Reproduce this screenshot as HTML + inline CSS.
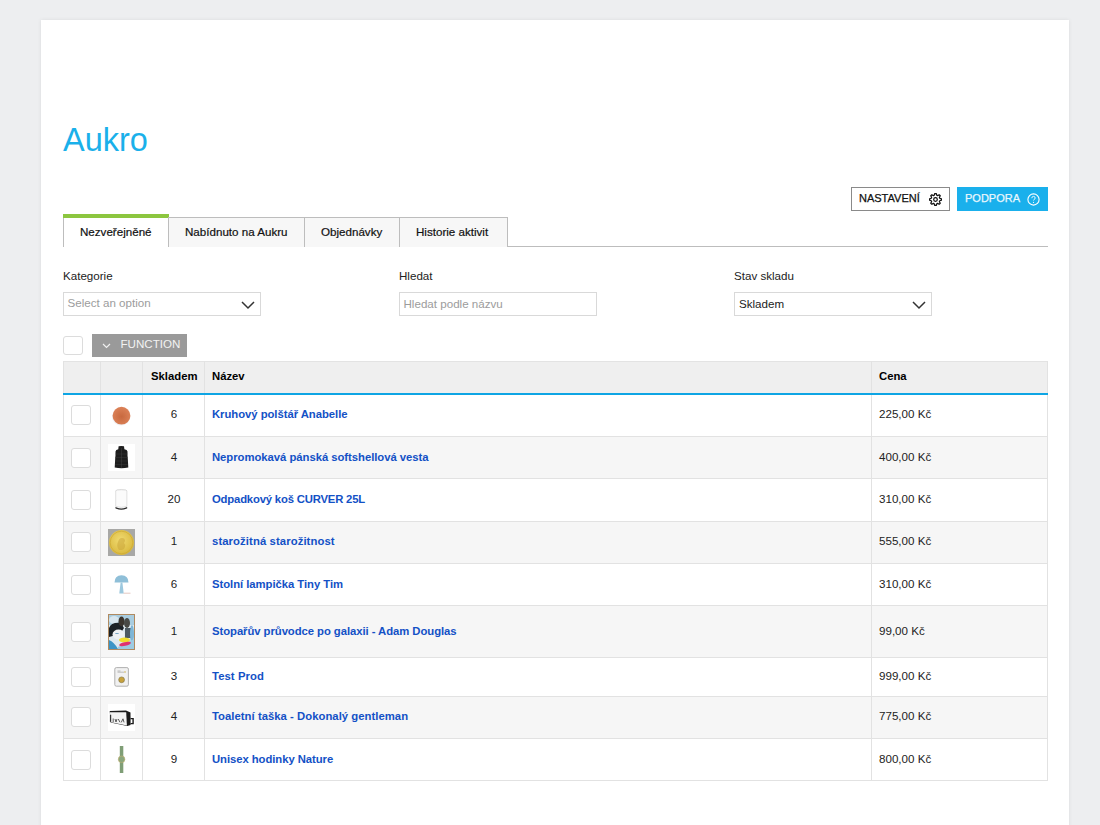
<!DOCTYPE html>
<html><head><meta charset="utf-8"><title>Aukro</title>
<style>
*{margin:0;padding:0;box-sizing:border-box}
html,body{width:1100px;height:825px;overflow:hidden;background:#edeef0;font-family:"Liberation Sans", sans-serif;color:#222}
.card{position:absolute;left:41px;top:20px;width:1028px;height:830px;background:#fff;box-shadow:0 0 4px rgba(0,0,0,.08)}
.a{position:absolute;white-space:nowrap}
.t11{font-size:11.6px;line-height:13px}
.up{font-size:11px!important;-webkit-text-stroke:.25px currentColor}
.b{font-size:11.3px!important;font-weight:bold}
.cb{position:absolute;width:19px;height:19px;border:1px solid #dcdcdc;border-radius:3px;background:#fff}
.lnk{color:#1351c6;font-weight:bold;font-size:11.3px!important}
</style></head><body>
<div class="card"></div>

<div class="a" style="left:63px;top:121.5px;font-size:32.5px;line-height:36px;color:#1ab0ea">Aukro</div>
<div class="a" style="left:851px;top:187px;width:99px;height:24px;border:1px solid #8a8a8a;background:#fff"></div>
<div class="a t11 up" style="left:859px;top:192px;color:#111">NASTAVENÍ</div>
<svg class="a" style="left:929px;top:192.5px" width="13" height="13" viewBox="0 0 13 13"><path d="M5.79 0.54 L7.21 0.54 L7.78 2.29 L8.57 2.62 L10.21 1.79 L11.21 2.79 L10.38 4.43 L10.71 5.22 L12.46 5.79 L12.46 7.21 L10.71 7.78 L10.38 8.57 L11.21 10.21 L10.21 11.21 L8.57 10.38 L7.78 10.71 L7.21 12.46 L5.79 12.46 L5.22 10.71 L4.43 10.38 L2.79 11.21 L1.79 10.21 L2.62 8.57 L2.29 7.78 L0.54 7.21 L0.54 5.79 L2.29 5.22 L2.62 4.43 L1.79 2.79 L2.79 1.79 L4.43 2.62 L5.22 2.29Z" fill="none" stroke="#111" stroke-width="1.25" stroke-linejoin="round"/><circle cx="6.5" cy="6.5" r="1.8" fill="none" stroke="#111" stroke-width="1.25"/></svg>
<div class="a" style="left:957px;top:187px;width:91px;height:24px;background:#1ab0ec"></div>
<div class="a t11 up" style="left:965px;top:192px;color:#eaf7fd">PODPORA</div>
<svg class="a" style="left:1027px;top:192.5px" width="13" height="13" viewBox="0 0 13 13"><circle cx="6.5" cy="6.5" r="5.6" fill="none" stroke="#fff" stroke-width="1.1"/><path d="M4.8 5.2 q0-1.8 1.7-1.8 q1.7 0 1.7 1.6 q0 1-1.2 1.5 q-.5.3-.5 1" fill="none" stroke="#eaf7fd" stroke-width="1"/><circle cx="6.5" cy="9.4" r=".6" fill="#eaf7fd"/></svg>

<div class="a" style="left:507px;top:246px;width:541px;height:1px;background:#bdbdbd"></div>
<div class="a" style="left:63px;top:214px;width:106px;height:4px;background:#8cc63f"></div>
<div class="a" style="left:63px;top:218px;width:106px;height:29px;border-left:1px solid #bdbdbd;border-right:1px solid #bdbdbd;background:#fff"></div>
<div class="a t11" style="left:80px;top:225px;color:#111;-webkit-text-stroke:.2px #111">Nezveřejněné</div>
<div class="a" style="left:168px;top:217px;width:137px;height:30px;border:1px solid #bdbdbd;border-bottom:0;background:#f7f7f7"></div>
<div class="a t11" style="left:185px;top:225px;color:#111;-webkit-text-stroke:.2px #111">Nabídnuto na Aukru</div>
<div class="a" style="left:304px;top:217px;width:96px;height:30px;border:1px solid #bdbdbd;border-bottom:0;background:#f7f7f7"></div>
<div class="a t11" style="left:321px;top:225px;color:#111;-webkit-text-stroke:.2px #111">Objednávky</div>
<div class="a" style="left:399px;top:217px;width:109px;height:30px;border:1px solid #bdbdbd;border-bottom:0;background:#f7f7f7"></div>
<div class="a t11" style="left:416px;top:225px;color:#111;-webkit-text-stroke:.2px #111">Historie aktivit</div>

<div class="a t11" style="left:63px;top:269px">Kategorie</div>
<div class="a" style="left:63px;top:292px;width:198px;height:24px;border:1px solid #d9d9d9;background:#fff"></div>
<div class="a t11" style="left:67.5px;top:296px;color:#9c9c9c">Select an option</div>
<svg class="a" style="left:241px;top:300.5px" width="14" height="9" viewBox="0 0 14 9"><path d="M1 1 L7 7 L13 1" fill="none" stroke="#333" stroke-width="1.5"/></svg>
<div class="a t11" style="left:399px;top:269px">Hledat</div>
<div class="a" style="left:399px;top:292px;width:198px;height:24px;border:1px solid #d9d9d9;background:#fff"></div>
<div class="a t11" style="left:403.5px;top:297px;color:#9c9c9c">Hledat podle názvu</div>
<div class="a t11" style="left:734px;top:269px">Stav skladu</div>
<div class="a" style="left:734px;top:292px;width:198px;height:24px;border:1px solid #d9d9d9;background:#fff"></div>
<div class="a t11" style="left:739px;top:297px">Skladem</div>
<svg class="a" style="left:912px;top:300.5px" width="14" height="9" viewBox="0 0 14 9"><path d="M1 1 L7 7 L13 1" fill="none" stroke="#333" stroke-width="1.5"/></svg>

<div class="cb" style="left:63px;top:336px;width:20px;height:19px"></div>
<div class="a" style="left:92px;top:334px;width:95px;height:23px;background:#9a9a9a"></div>
<svg class="a" style="left:102px;top:343px" width="9" height="6" viewBox="0 0 9 6"><path d="M1 1 L4.5 4.5 L8 1" fill="none" stroke="#f0f0f0" stroke-width="1.2"/></svg>
<div class="a t11" style="left:120.5px;top:337px;color:#f2f2f2">FUNCTION</div>

<div class="a" style="left:63px;top:361px;width:985px;height:34px;background:#efefef;border-top:1px solid #e3e3e3"></div>
<div class="a t11 b" style="left:151px;top:370px;color:#000">Skladem</div>
<div class="a t11 b" style="left:212px;top:370px;color:#000">Název</div>
<div class="a t11 b" style="left:879px;top:370px;color:#000">Cena</div>
<div class="a" style="left:63px;top:395px;width:985px;height:42px;background:#fff;border-bottom:1px solid #e2e2e2"></div>
<div class="cb" style="left:71px;top:405px;width:20px;height:20px"></div>
<svg style="position:absolute;left:108px;top:402px" width="27" height="27" viewBox="0 0 27 27"><defs><radialGradient id="gb" cx="50%" cy="55%" r="55%"><stop offset="0" stop-color="#c8693f"/><stop offset="1" stop-color="#dc8258"/></radialGradient></defs><ellipse cx="13" cy="15" rx="9" ry="8.6" fill="#e6e8ee" opacity=".6"/><circle cx="13.5" cy="13.7" r="8.9" fill="url(#gb)"/></svg>
<div class="a t11" style="left:143px;width:62px;text-align:center;top:407px">6</div>
<div class="a t11 lnk" style="left:212px;top:408px;letter-spacing:-0.04px">Kruhový polštář Anabelle</div>
<div class="a t11" style="left:879px;top:407px">225,00 Kč</div>
<div class="a" style="left:63px;top:437px;width:985px;height:42px;background:#f6f6f6;border-bottom:1px solid #e2e2e2"></div>
<div class="cb" style="left:71px;top:448px;width:20px;height:20px"></div>
<svg style="position:absolute;left:108px;top:444px" width="27" height="27" viewBox="0 0 27 27"><rect width="27" height="27" fill="#fff"/><path d="M10.6 2.3 Q13.3 1.8 16 2.3 L16.4 5.2 Q19.3 5.6 19.5 7.5 Q19.3 11 19.8 14.5 L20.3 23.6 Q13.5 24.8 6.7 23.6 L7.2 14.5 Q7.7 11 7.5 7.5 Q7.7 5.6 10.3 5.2 Z" fill="#1d1d1d"/><path d="M7.5 10 h12 M7.3 13.5 h12.4 M7.2 17 h12.6 M7.1 20.5 h12.8" stroke="#383838" stroke-width=".5"/><path d="M13.5 4 v20" stroke="#404040" stroke-width=".5"/></svg>
<div class="a t11" style="left:143px;width:62px;text-align:center;top:450px">4</div>
<div class="a t11 lnk" style="left:212px;top:451px;letter-spacing:-0.036px">Nepromokavá pánská softshellová vesta</div>
<div class="a t11" style="left:879px;top:450px">400,00 Kč</div>
<div class="a" style="left:63px;top:479px;width:985px;height:43px;background:#fff;border-bottom:1px solid #e2e2e2"></div>
<div class="cb" style="left:71px;top:490px;width:20px;height:20px"></div>
<svg style="position:absolute;left:108px;top:487px" width="27" height="27" viewBox="0 0 27 27"><g transform="translate(0,-0.6)"><ellipse cx="13.3" cy="4.5" rx="5.6" ry="1.4" fill="#f4f4f4" stroke="#c8c8c8" stroke-width=".6"/><path d="M7.7 4.5 v15.5 q5.6 2 11.2 0 v-15.5" fill="#fbfbfb" stroke="#cfcfcf" stroke-width=".6"/><path d="M7.5 21 l1 0.8 q4.8 1.8 9.6 0 l1-0.8" fill="none" stroke="#2a2a2a" stroke-width="1.3"/></g></svg>
<div class="a t11" style="left:143px;width:62px;text-align:center;top:492px">20</div>
<div class="a t11 lnk" style="left:212px;top:493px;letter-spacing:-0.18px">Odpadkový koš CURVER 25L</div>
<div class="a t11" style="left:879px;top:492px">310,00 Kč</div>
<div class="a" style="left:63px;top:522px;width:985px;height:42px;background:#f6f6f6;border-bottom:1px solid #e2e2e2"></div>
<div class="cb" style="left:71px;top:532px;width:20px;height:20px"></div>
<svg style="position:absolute;left:108px;top:529px" width="27" height="27" viewBox="0 0 27 27"><defs><radialGradient id="gc" cx="45%" cy="40%" r="60%"><stop offset="0" stop-color="#f0da70"/><stop offset="1" stop-color="#d9b83e"/></radialGradient></defs><rect width="27" height="27" fill="#a8a8a6"/><circle cx="13.5" cy="13.5" r="12.5" fill="url(#gc)"/><circle cx="13.5" cy="13.5" r="11.3" fill="none" stroke="#c9a530" stroke-width=".6"/><path d="M11 21 q-3-4-1-8 q1-4 4-4 q3 0 3 3 l-1 2 q2 2 1 4 q-1 3-3 3z" fill="#caa53a" opacity=".55"/></svg>
<div class="a t11" style="left:143px;width:62px;text-align:center;top:534px">1</div>
<div class="a t11 lnk" style="left:212px;top:535px;letter-spacing:0.095px">starožitná starožitnost</div>
<div class="a t11" style="left:879px;top:534px">555,00 Kč</div>
<div class="a" style="left:63px;top:564px;width:985px;height:42px;background:#fff;border-bottom:1px solid #e2e2e2"></div>
<div class="cb" style="left:71px;top:575px;width:20px;height:20px"></div>
<svg style="position:absolute;left:108px;top:571px" width="27" height="27" viewBox="0 0 27 27"><path d="M6.5 11.5 q0-7 7-7.2 q7 .2 7 7.2z" fill="#8fbfd8"/><path d="M12.6 11.5 h1.8 l1.3 11 h-4.4z" fill="#9cc8de"/><path d="M15.5 22.2 h7" stroke="#d8b0a8" stroke-width=".7"/></svg>
<div class="a t11" style="left:143px;width:62px;text-align:center;top:577px">6</div>
<div class="a t11 lnk" style="left:212px;top:578px;letter-spacing:-0.04px">Stolní lampička Tiny Tim</div>
<div class="a t11" style="left:879px;top:577px">310,00 Kč</div>
<div class="a" style="left:63px;top:606px;width:985px;height:52px;background:#f6f6f6;border-bottom:1px solid #e2e2e2"></div>
<div class="cb" style="left:71px;top:622px;width:20px;height:20px"></div>
<svg style="position:absolute;left:108px;top:614px" width="27" height="36" viewBox="0 0 27 36"><defs><filter id="bl" x="-10%" y="-10%" width="120%" height="120%"><feGaussianBlur stdDeviation="0.6"/></filter></defs><rect width="27" height="36" fill="#b08a60"/><rect x="1" y="1" width="25" height="34" fill="#dde8ee"/>
<g filter="url(#bl)">
<rect x="1" y="1" width="25" height="10" fill="#a9cde0"/>
<ellipse cx="6" cy="6" rx="5" ry="4" fill="#d8e6ee"/>
<path d="M1 14 q2-6 12-5 l3 5 l-4 6 l-11 3z" fill="#1c2126"/>
<ellipse cx="13.5" cy="7.5" rx="3" ry="5" fill="#3b352f"/>
<ellipse cx="19" cy="9" rx="3" ry="5" fill="#4a4a44"/>
<ellipse cx="10.5" cy="20.5" rx="6" ry="5" fill="#eef1f3"/>
<ellipse cx="9" cy="19.5" rx="2" ry=".6" fill="#6fa0c0"/>
<rect x="17" y="14" width="7.5" height="10" fill="#4e5a62"/>
<ellipse cx="24" cy="20" rx="2" ry="9" fill="#7eb6d6"/>
<path d="M1 26 q5 2 9 9 h-9z" fill="#3a94c6"/>
<path d="M10 33 q8-4 16-8 v10 h-16z" fill="#9ccbe3"/>
<ellipse cx="16.5" cy="26" rx="5.5" ry="2.4" fill="#f1dd2e"/>
<ellipse cx="17" cy="30" rx="6" ry="1.9" fill="#e0306e" transform="rotate(-12 17 30)"/>
</g>
</svg>
<div class="a t11" style="left:143px;width:62px;text-align:center;top:624px">1</div>
<div class="a t11 lnk" style="left:212px;top:625px;letter-spacing:-0.055px">Stopařův průvodce po galaxii - Adam Douglas</div>
<div class="a t11" style="left:879px;top:624px">99,00 Kč</div>
<div class="a" style="left:63px;top:658px;width:985px;height:39px;background:#fff;border-bottom:1px solid #e2e2e2"></div>
<div class="cb" style="left:71px;top:667px;width:20px;height:20px"></div>
<svg style="position:absolute;left:108px;top:663px" width="27" height="27" viewBox="0 0 27 27"><rect x="6.8" y="4.6" width="13.6" height="18.6" rx="1.5" fill="#f1f1f1" stroke="#a8a8a8" stroke-width=".9"/><path d="M9.5 9.2 h6.5 M9.5 8 h3" stroke="#999" stroke-width=".6"/><circle cx="17" cy="9" r="1" fill="#d8c890"/><circle cx="13.6" cy="16.8" r="2.9" fill="#c8a23c" stroke="#7a7048" stroke-width=".6"/></svg>
<div class="a t11" style="left:143px;width:62px;text-align:center;top:669px">3</div>
<div class="a t11 lnk" style="left:212px;top:670px;letter-spacing:0.07px">Test Prod</div>
<div class="a t11" style="left:879px;top:669px">999,00 Kč</div>
<div class="a" style="left:63px;top:697px;width:985px;height:42px;background:#f6f6f6;border-bottom:1px solid #e2e2e2"></div>
<div class="cb" style="left:71px;top:707px;width:20px;height:20px"></div>
<svg style="position:absolute;left:108px;top:704px" width="27" height="27" viewBox="0 0 27 27"><rect width="27" height="27" fill="#fff"/><path d="M1.7 7 L18 6.6 L22.5 8.5 L22.6 21 L19.3 22 L2.6 18.6 Z" fill="#1a1a1a"/><path d="M1.9 8.3 L18.2 8.2 L18.9 21.4 L3 18.2 Z" fill="#f3f3f3"/><path d="M22.5 14.6 h2.6 v5 h-2.6" stroke="#1a1a1a" stroke-width="1.4" fill="none"/><rect x="1.9" y="10.8" width="1.3" height="7" fill="#333"/><path d="M5.2 14.5 v3.6 M7 15 l1 3 l1-3 M10.3 15 l1.6 3.2 M13.2 18.4 l1.8-3.6 l1 3.6" stroke="#3a3a3a" stroke-width=".8" fill="none"/></svg>
<div class="a t11" style="left:143px;width:62px;text-align:center;top:709px">4</div>
<div class="a t11 lnk" style="left:212px;top:710px;letter-spacing:0.03px">Toaletní taška - Dokonalý gentleman</div>
<div class="a t11" style="left:879px;top:709px">775,00 Kč</div>
<div class="a" style="left:63px;top:739px;width:985px;height:42px;background:#fff;border-bottom:1px solid #e2e2e2"></div>
<div class="cb" style="left:71px;top:750px;width:20px;height:20px"></div>
<svg style="position:absolute;left:108px;top:746px" width="27" height="27" viewBox="0 0 27 27"><rect x="11.8" y="0" width="3.5" height="27" fill="#7f9e76"/><circle cx="13.6" cy="13.3" r="3.3" fill="#8aa77d" stroke="#c8b070" stroke-width=".6"/></svg>
<div class="a t11" style="left:143px;width:62px;text-align:center;top:752px">9</div>
<div class="a t11 lnk" style="left:212px;top:753px;letter-spacing:-0.06px">Unisex hodinky Nature</div>
<div class="a t11" style="left:879px;top:752px">800,00 Kč</div>
<div class="a" style="left:63px;top:361px;width:1px;height:420px;background:#e2e2e2"></div>
<div class="a" style="left:100px;top:361px;width:1px;height:420px;background:#e2e2e2"></div>
<div class="a" style="left:142px;top:361px;width:1px;height:420px;background:#e2e2e2"></div>
<div class="a" style="left:204px;top:361px;width:1px;height:420px;background:#e2e2e2"></div>
<div class="a" style="left:871px;top:361px;width:1px;height:420px;background:#e2e2e2"></div>
<div class="a" style="left:1047px;top:361px;width:1px;height:420px;background:#e2e2e2"></div>
<div class="a" style="left:63px;top:393px;width:985px;height:2px;background:#0ea5e4"></div>
</body></html>
